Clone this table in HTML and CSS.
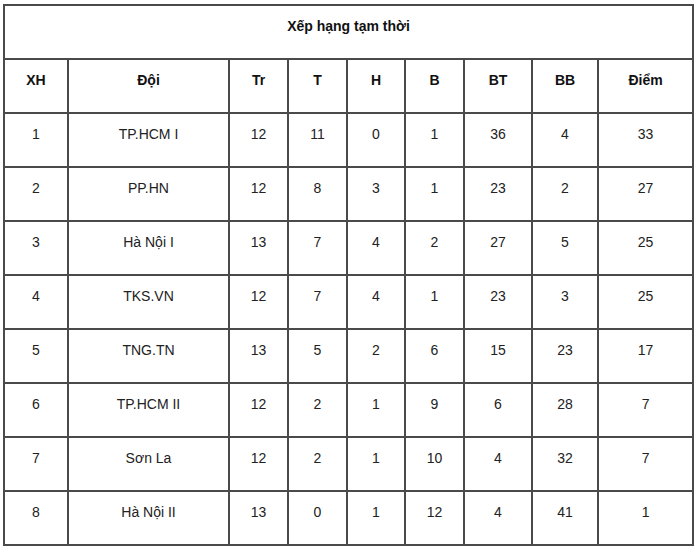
FILE: index.html
```html
<!DOCTYPE html>
<html lang="vi">
<head>
<meta charset="utf-8">
<title>Xếp hạng tạm thời</title>
<link rel="stylesheet" href="styles.css">
</head>
<body>
<table class="standings">
  <colgroup>
    <col class="c-xh"><col class="c-team"><col class="c-tr"><col class="c-t"><col class="c-h"><col class="c-b"><col class="c-bt"><col class="c-bb"><col class="c-pts">
  </colgroup>
  <thead>
    <tr class="title-row"><th colspan="9">Xếp hạng tạm thời</th></tr>
    <tr class="head-row"><th>XH</th><th>Đội</th><th>Tr</th><th>T</th><th>H</th><th>B</th><th>BT</th><th>BB</th><th>Điểm</th></tr>
  </thead>
  <tbody>
    <tr><td>1</td><td>TP.HCM I</td><td>12</td><td>11</td><td>0</td><td>1</td><td>36</td><td>4</td><td>33</td></tr>
    <tr><td>2</td><td>PP.HN</td><td>12</td><td>8</td><td>3</td><td>1</td><td>23</td><td>2</td><td>27</td></tr>
    <tr><td>3</td><td>Hà Nội I</td><td>13</td><td>7</td><td>4</td><td>2</td><td>27</td><td>5</td><td>25</td></tr>
    <tr><td>4</td><td>TKS.VN</td><td>12</td><td>7</td><td>4</td><td>1</td><td>23</td><td>3</td><td>25</td></tr>
    <tr><td>5</td><td>TNG.TN</td><td>13</td><td>5</td><td>2</td><td>6</td><td>15</td><td>23</td><td>17</td></tr>
    <tr><td>6</td><td>TP.HCM II</td><td>12</td><td>2</td><td>1</td><td>9</td><td>6</td><td>28</td><td>7</td></tr>
    <tr><td>7</td><td>Sơn La</td><td>12</td><td>2</td><td>1</td><td>10</td><td>4</td><td>32</td><td>7</td></tr>
    <tr><td>8</td><td>Hà Nội II</td><td>13</td><td>0</td><td>1</td><td>12</td><td>4</td><td>41</td><td>1</td></tr>
  </tbody>
</table>
</body>
</html>
```
FILE: styles.css
```css
html, body {
  margin: 0;
  padding: 0;
  background: #fff;
}
body {
  padding: 4px 0 0 3px;
  font-family: "Liberation Sans", Arial, sans-serif;
  font-size: 14px;
  color: #222;
}
.standings {
  border-collapse: collapse;
  table-layout: fixed;
  width: 691px;
}
.standings th,
.standings td {
  border: 2px solid #4a4a4a;
  height: 54px;
  padding: 0 2px 13px;
  box-sizing: border-box;
  text-align: center;
  vertical-align: middle;
}
.standings th {
  font-weight: bold;
  color: #111;
}
.c-xh { width: 64px; }
.c-team { width: 161px; }
.c-tr { width: 59px; }
.c-t { width: 59px; }
.c-h { width: 58px; }
.c-b { width: 59px; }
.c-bt { width: 68px; }
.c-bb { width: 66px; }
.c-pts { width: 95px; }
```
